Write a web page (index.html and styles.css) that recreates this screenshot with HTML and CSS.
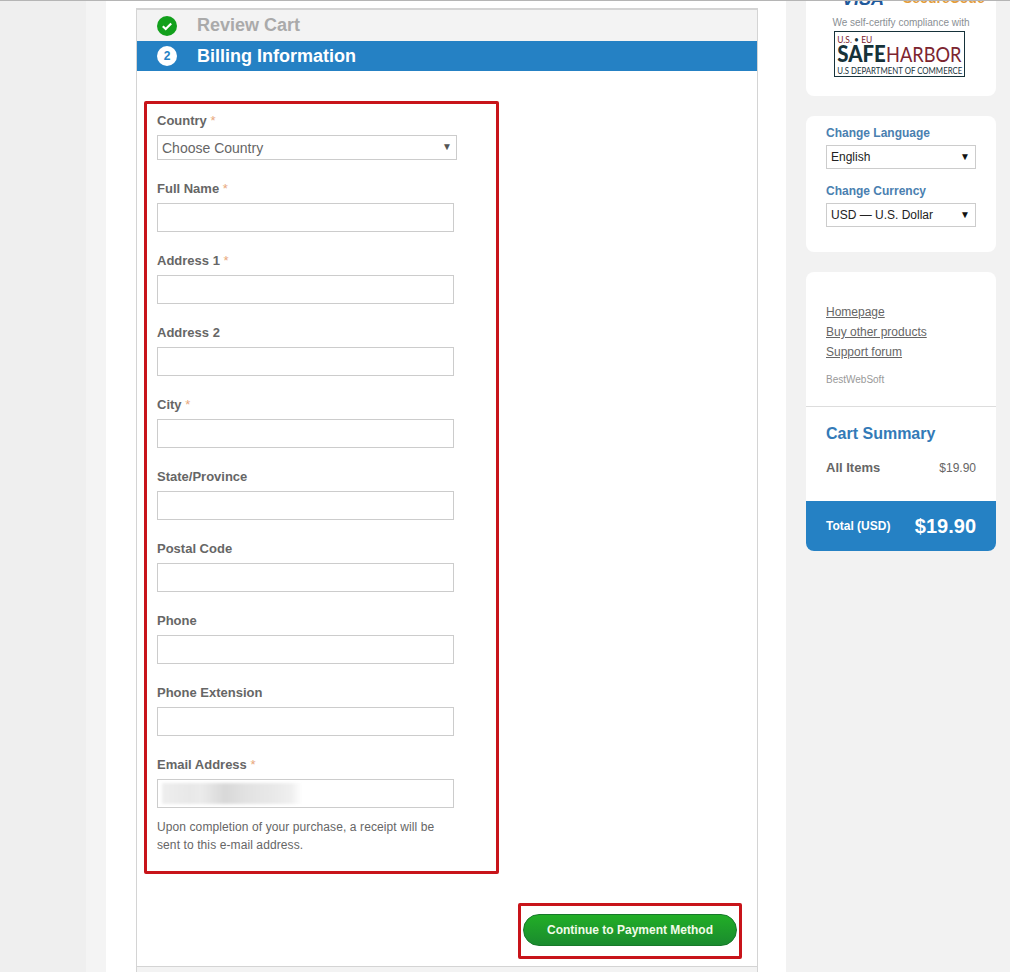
FILE: index.html
```html
<!DOCTYPE html>
<html lang="en">

<head>
    <meta charset="UTF-8">
    <title>Billing Information</title>
    <link rel="stylesheet" href="styles.css">
</head>

<body>
    <div class="page">
        <div class="gutter"></div>
        <main class="content">
            <div class="checkout">
                <div class="step step-done">
                    <span class="step-icon">
                        <svg width="20" height="20" viewBox="0 0 20 20">
                            <circle cx="10" cy="10" r="10" fill="#12a01c" />
                            <path d="M5.8 10.2l2.9 2.8 5.5-5.6" fill="none" stroke="#fff" stroke-width="2.2" />
                        </svg>
                    </span>
                    Review Cart
                </div>
                <div class="step step-active">
                    <span class="step-icon step-num">2</span>
                    Billing Information
                </div>

                <form class="billing">
                    <div class="form-group select-group">
                        <label>Country <i>*</i></label>
                        <div class="fake-select country-select">Choose Country<span class="arrow">▼</span></div>
                    </div>
                    <div class="form-group">
                        <label>Full Name <i>*</i></label>
                        <input type="text">
                    </div>
                    <div class="form-group">
                        <label>Address 1 <i>*</i></label>
                        <input type="text">
                    </div>
                    <div class="form-group">
                        <label>Address 2</label>
                        <input type="text">
                    </div>
                    <div class="form-group">
                        <label>City <i>*</i></label>
                        <input type="text">
                    </div>
                    <div class="form-group">
                        <label>State/Province</label>
                        <input type="text">
                    </div>
                    <div class="form-group">
                        <label>Postal Code</label>
                        <input type="text">
                    </div>
                    <div class="form-group">
                        <label>Phone</label>
                        <input type="text">
                    </div>
                    <div class="form-group">
                        <label>Phone Extension</label>
                        <input type="text">
                    </div>
                    <div class="form-group">
                        <label>Email Address <i>*</i></label>
                        <div class="email-field"><span class="blur"></span></div>
                    </div>
                    <p class="note">Upon completion of your purchase, a receipt will be sent to this e-mail address.</p>
                    <div class="form-actions">
                        <button type="button">Continue to Payment Method</button>
                    </div>
                </form>
                <div class="next-step"></div>

                <div class="mark mark-form"></div>
                <div class="mark mark-button"></div>
            </div>
        </main>

        <aside class="sidebar">
            <div class="card card-trust">
                <div class="trust-logos">
                    <span class="visa">VISA</span>
                    <span class="secure">SecureCode</span>
                </div>
                <p class="certify">We self-certify compliance with</p>
                <svg class="harbor" width="131" height="46" viewBox="0 0 131 46">
                    <rect x="0.5" y="0.5" width="130" height="45" fill="#fff" stroke="#16323a" />
                    <text x="3.3" y="12" font-size="10" fill="#7c2530" textLength="35" lengthAdjust="spacingAndGlyphs">U.S. <tspan fill="#16323a">•</tspan> EU</text>
                    <text x="3.3" y="31" font-size="22" font-weight="900" fill="#16323a" textLength="48.5" lengthAdjust="spacingAndGlyphs">SAFE</text>
                    <text x="52" y="31" font-size="22" fill="#7c2530" textLength="75.5" lengthAdjust="spacingAndGlyphs">HARBOR</text>
                    <text x="3.3" y="42.7" font-size="9.7" fill="#16323a" textLength="125" lengthAdjust="spacingAndGlyphs">U.S DEPARTMENT OF COMMERCE</text>
                </svg>
            </div>

            <div class="card card-prefs">
                <h4>Change Language</h4>
                <div class="fake-select pref-select">English<span class="arrow">▼</span></div>
                <h4>Change Currency</h4>
                <div class="fake-select pref-select">USD — U.S. Dollar<span class="arrow">▼</span></div>
            </div>

            <div class="card card-summary">
                <div class="links">
                    <a href="#">Homepage</a>
                    <a href="#">Buy other products</a>
                    <a href="#">Support forum</a>
                    <p class="vendor">BestWebSoft</p>
                </div>
                <div class="summary">
                    <h3>Cart Summary</h3>
                    <div class="summary-row">
                        <strong>All Items</strong>
                        <span>$19.90</span>
                    </div>
                </div>
                <div class="total">
                    <span class="total-label">Total (USD)</span>
                    <span class="total-price">$19.90</span>
                </div>
            </div>
        </aside>
    </div>
</body>

</html>
```

FILE: styles.css
```css
html,
body {
    height: 972px;
    overflow: hidden;
}

body {
    margin: 0;
    font-family: "Liberation Sans", Arial, sans-serif;
    background-color: #f2f2f2;
    color: #666;
    border-top: 1px solid #b5b5b5;
    box-sizing: border-box;
}

.page {
    display: flex;
    height: 971px;
}

.gutter {
    width: 86px;
    flex-shrink: 0;
    background-color: #efefef;
}

.content {
    width: 700px;
    flex-shrink: 0;
    background-color: white;
    border-left: 20px solid #f4f4f4;
    padding: 7px 28px 0 30px;
    box-sizing: border-box;
}

/* checkout panel */
.checkout {
    position: relative;
    width: 622px;
    height: 964px;
    border: 1px solid #d4d4d4;
    border-top-width: 2px;
    border-bottom: 0;
    box-sizing: border-box;
}

.step {
    display: flex;
    align-items: center;
    padding-left: 20px;
    font-size: 18px;
    font-weight: bold;
}

.step-done {
    height: 31px;
    background-color: #f3f3f3;
    color: #aaa;
}

.step-active {
    height: 30px;
    background-color: #2581c4;
    color: white;
}

.step-icon {
    display: flex;
    justify-content: center;
    align-items: center;
    width: 20px;
    height: 20px;
    margin-right: 20px;
}

.step-num {
    border-radius: 50%;
    background-color: white;
    color: #2581c4;
    font-size: 12px;
}

.billing {
    padding: 41px 0 0 20px;
}

.form-group {
    margin-bottom: 16px;
    height: 56px;
}

.select-group {
    height: 52px;
}

label {
    display: block;
    height: 23px;
    padding-top: 1px;
    box-sizing: border-box;
    font-size: 13px;
    line-height: 16px;
    font-weight: bold;
    color: #666;
}

label i {
    font-style: normal;
    font-weight: normal;
    color: #e8a77c;
}

input,
.email-field {
    display: block;
    width: 297px;
    height: 29px;
    padding: 0;
    border: 1px solid #ccc;
    box-sizing: border-box;
    background-color: white;
}

.email-field {
    padding: 3px 4px;
}

.blur {
    display: block;
    width: 140px;
    height: 21px;
    background: linear-gradient(90deg, #eeeeee, #e8e8e8 20%, #ebebeb 28%, #d8d8d8 45%, #e2e2e2 60%, #e8e8e8 78%, #efefef 92%, #fff);
    filter: blur(1.5px);
}

.fake-select {
    position: relative;
    box-sizing: border-box;
    border: 1px solid #ccc;
    background-color: white;
}

.arrow {
    position: absolute;
    font-size: 10px;
}

.country-select {
    width: 300px;
    height: 25px;
    padding-left: 4px;
    font-size: 14px;
    line-height: 24px;
    color: #666;
}

.country-select .arrow {
    top: -1px;
    right: 4px;
    color: #555;
}

.note {
    width: 285px;
    margin: -10px 0 0;
    font-size: 12px;
    line-height: 18px;
    letter-spacing: 0.1px;
    color: #666;
}

.form-actions {
    display: flex;
    justify-content: flex-end;
    width: 580px;
    margin-top: 60px;
}

button {
    width: 214px;
    height: 32px;
    padding: 0;
    border: 1px solid #17792a;
    border-radius: 16px;
    background: linear-gradient(#22ae27, #1a8b2e);
    color: #f2fbe9;
    font-family: inherit;
    font-size: 12px;
    font-weight: bold;
}

.next-step {
    position: absolute;
    left: 0;
    right: 0;
    top: 956px;
    height: 6px;
    background-color: #f3f3f3;
    border-top: 1px solid #d4d4d4;
}

/* red annotation boxes drawn over the form */
.mark {
    position: absolute;
    box-sizing: border-box;
    border: 3px solid #c8141a;
    border-radius: 2px;
}

.mark-form {
    left: 7px;
    top: 91px;
    width: 355px;
    height: 773px;
}

.mark-button {
    left: 381px;
    top: 893px;
    width: 224px;
    height: 56px;
}

/* sidebar */
.sidebar {
    width: 190px;
    margin-left: 20px;
    flex-shrink: 0;
    display: flex;
    flex-direction: column;
    gap: 20px;
}

.card {
    background-color: white;
    border-radius: 8px;
    overflow: hidden;
}

.card-trust {
    height: 95px;
    flex-shrink: 0;
    border-radius: 0 0 8px 8px;
    display: flex;
    flex-direction: column;
    align-items: center;
}

.trust-logos {
    height: 6px;
    width: 100%;
    overflow: hidden;
    position: relative;
}

.visa {
    position: absolute;
    left: 36px;
    top: -10px;
    font-size: 18px;
    line-height: 16px;
    font-weight: bold;
    font-style: italic;
    color: #1f5a9c;
}

.secure {
    position: absolute;
    left: 97px;
    top: -10px;
    font-size: 14px;
    line-height: 14px;
    font-weight: bold;
    color: #e39c3a;
}

.certify {
    margin: 10px 0 0;
    height: 12px;
    font-size: 10px;
    line-height: 12px;
    color: #8a8f94;
    white-space: nowrap;
}

.harbor {
    display: block;
    flex-shrink: 0;
    margin-top: 2px;
    margin-left: -3px;
    font-family: Lato, sans-serif;
}

.card-prefs {
    height: 136px;
    flex-shrink: 0;
    padding: 10px 20px 0;
    box-sizing: border-box;
}

.card-prefs h4 {
    margin: 0;
    height: 19px;
    font-size: 12px;
    line-height: 14px;
    color: #4a80b0;
}

.pref-select {
    width: 150px;
    height: 24px;
    margin-bottom: 15px;
    padding-left: 4px;
    font-size: 12px;
    line-height: 23px;
    color: #222;
}

.pref-select .arrow {
    top: -1px;
    right: 5px;
    color: #111;
}

.links {
    height: 135px;
    padding: 30px 20px 0;
    box-sizing: border-box;
    border-bottom: 1px solid #ddd;
}

.links a {
    display: block;
    font-size: 12px;
    line-height: 20px;
    color: #666;
}

.vendor {
    margin: 12px 0 0;
    font-size: 10px;
    line-height: 12px;
    color: #999;
}

.summary {
    height: 94px;
    padding: 17px 20px 0;
    box-sizing: border-box;
}

.summary h3 {
    margin: 0 0 16px;
    font-size: 16px;
    line-height: 20px;
    color: #337ab7;
}

.summary-row {
    display: flex;
    justify-content: space-between;
    font-size: 12px;
    line-height: 16px;
}

.summary-row strong {
    font-size: 13px;
}

.total {
    display: flex;
    justify-content: space-between;
    align-items: center;
    height: 50px;
    padding: 0 20px;
    background-color: #2581c4;
    color: white;
}

.total-label {
    font-size: 12px;
    font-weight: bold;
}

.total-price {
    font-size: 20px;
    font-weight: bold;
}
```
